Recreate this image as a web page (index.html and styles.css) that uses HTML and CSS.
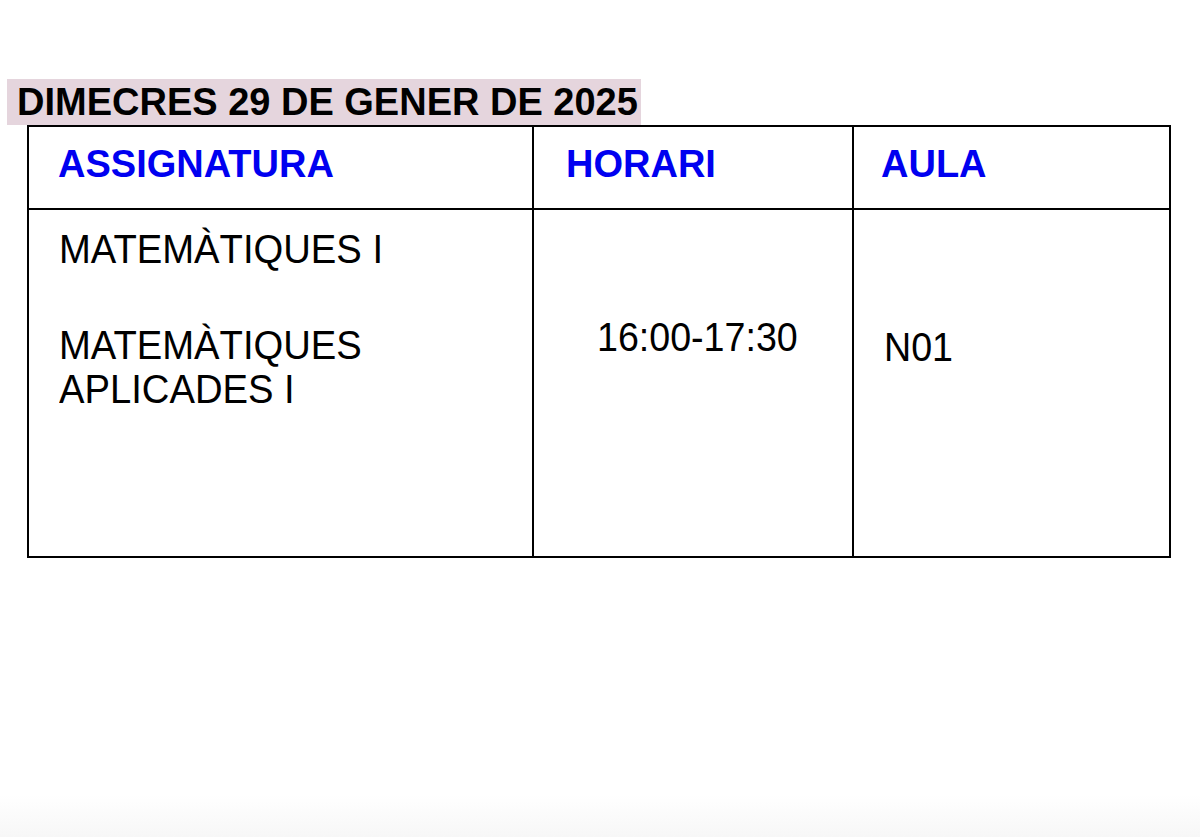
FILE: index.html
```html
<!DOCTYPE html>
<html lang="ca">
<head>
<meta charset="utf-8">
<title>Dimecres 29 de gener de 2025</title>
<link rel="stylesheet" href="styles.css">
</head>
<body>
<main class="page">
  <h1 class="day-title">DIMECRES 29 DE GENER DE 2025</h1>
  <div class="schedule">
    <div class="cell head col-subject">ASSIGNATURA</div>
    <div class="cell head col-time">HORARI</div>
    <div class="cell head col-room">AULA</div>

    <div class="cell body col-subject">
      <p class="entry"><span class="narrow">MATEMÀTIQUES I</span></p>
      <p class="entry entry-next"><span class="narrow">MATEMÀTIQUES<br>APLICADES I</span></p>
    </div>
    <div class="cell body col-time">
      <p class="entry time"><span class="narrow">16:00-17:30</span></p>
    </div>
    <div class="cell body col-room">
      <p class="entry room"><span class="narrow">N01</span></p>
    </div>
  </div>
</main>
</body>
</html>
```
FILE: styles.css
```css
html {
  background: linear-gradient(to bottom, #ffffff 0, #ffffff 795px, #f7f7f7 837px) no-repeat;
  min-height: 100%;
}

body {
  margin: 0;
  font-family: "Liberation Sans", Arial, sans-serif;
  color: #000;
}

.page {
  padding-top: 79px;
}

.day-title {
  display: table;
  margin: 0 0 0 7px;
  padding: 0 3px 0 10px;
  height: 46px;
  line-height: 46px;
  background: #e5d5dd;
  font-size: 38px;
  font-weight: 700;
  white-space: nowrap;
}

.schedule {
  display: grid;
  grid-template-columns: 503px 320px 317px;
  grid-template-rows: 83px 346px;
  width: 1140px;
  margin-left: 27px;
  border: 2px solid #000;
}

.cell {
  box-sizing: border-box;
}

.cell.col-time,
.cell.col-room {
  border-left: 2px solid #000;
}

.head {
  border-bottom: 2px solid #000;
  padding-top: 15px;
  font-size: 38px;
  line-height: 44px;
  font-weight: 700;
  color: #0000f0;
}

.head.col-subject { padding-left: 29px; }
.head.col-time { padding-left: 32px; }
.head.col-room { padding-left: 27px; }

.body {
  font-size: 40px;
  line-height: 44px;
}

.body.col-subject { padding: 17px 0 0 30px; }
.body.col-time { padding: 105px 0 0 63px; }
.body.col-room { padding: 115px 0 0 30px; }

.entry {
  margin: 0;
}

.entry-next {
  margin-top: 52px;
}

.narrow {
  display: inline-block;
  transform: scaleX(0.94);
  transform-origin: left center;
  white-space: nowrap;
}

.col-subject .narrow {
  transform: scaleX(0.955);
}
```
